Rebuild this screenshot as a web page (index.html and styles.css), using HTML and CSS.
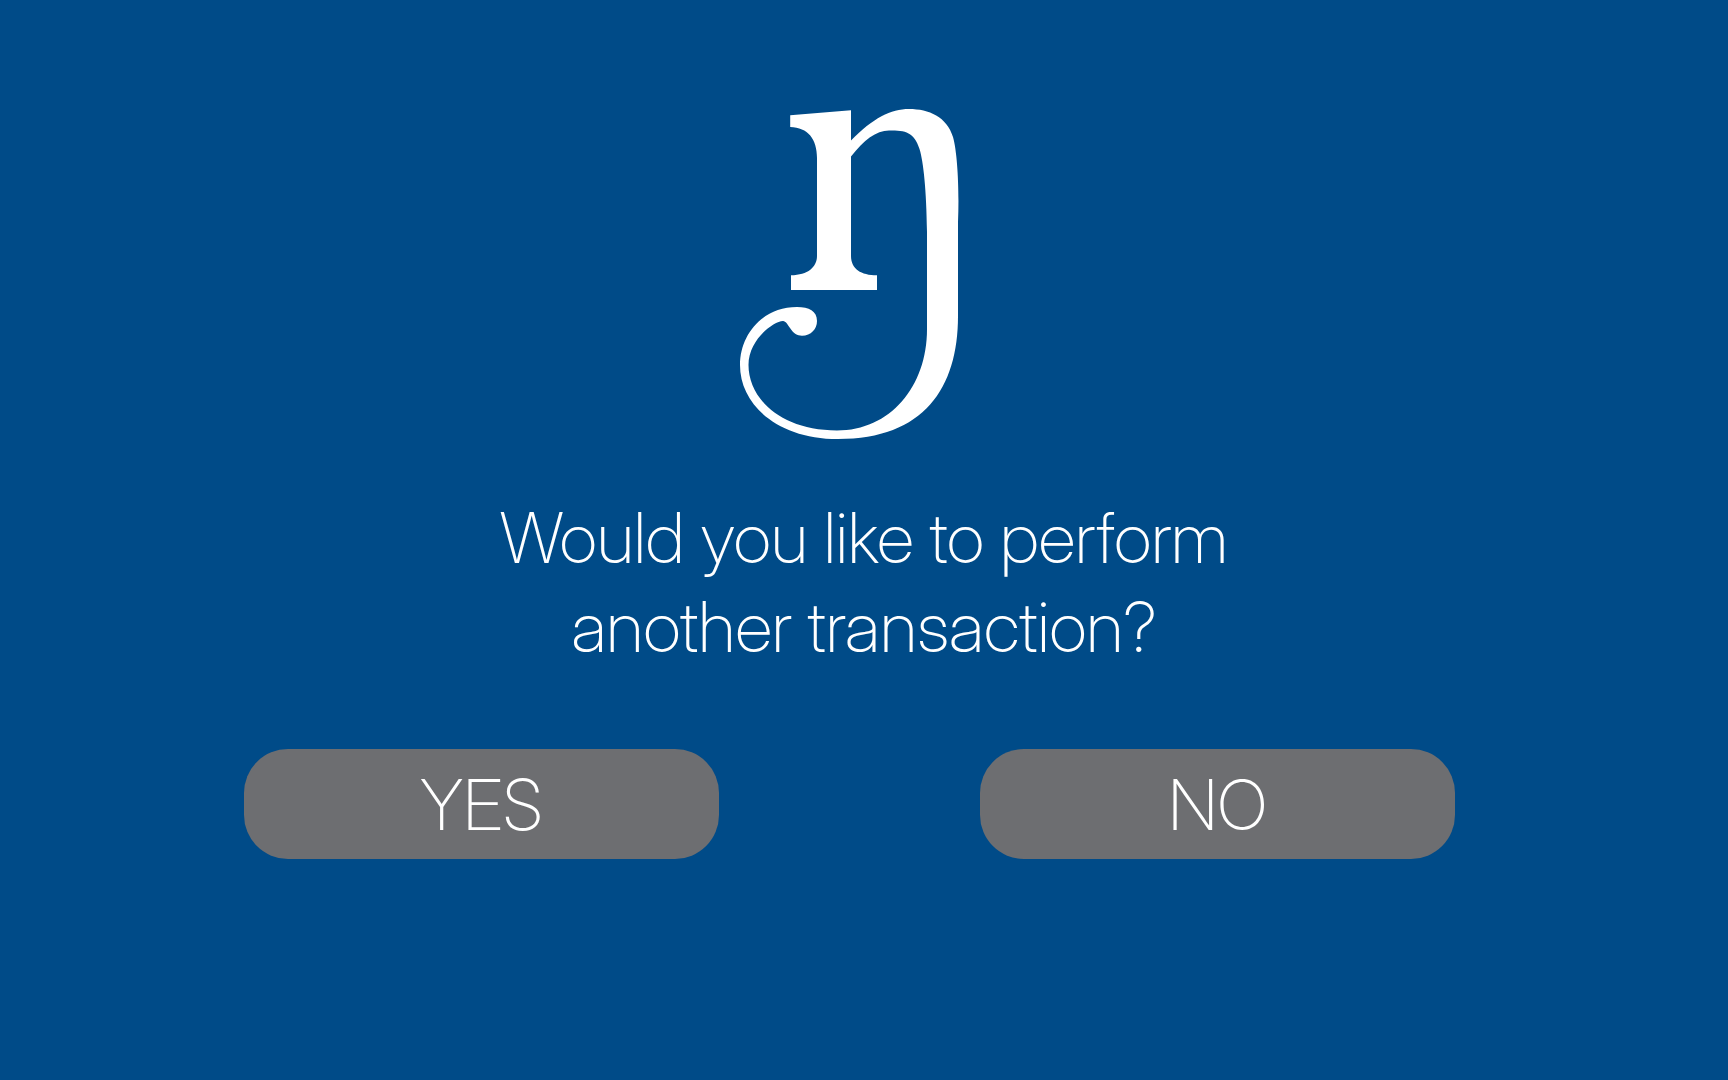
FILE: index.html
```html
<!DOCTYPE html>
<html lang="en">
<head>
<meta charset="utf-8">
<meta name="viewport" content="width=device-width, initial-scale=1">
<title>Another transaction?</title>
<link rel="stylesheet" href="styles.css">
</head>
<body>
<main class="screen">
  <div class="brand">
    <svg class="logo" viewBox="740 108 219 332" role="img" aria-label="Logo">
      <path fill="currentColor" d="M790.2 115.2 L851 110.2 V140.5 C873 118 891 109 909 109 C929 109 947 117 953 137 C957.5 153 959.4 190 958 222 V316 C958 388 924 439 838 439 C778 439 740 405 740 365 C740 334 763 307 797 307 C809 307 817 311 817 321 C817 329 811 335.7 802 335.7 C797 335.7 794 334 790 328 C787 324 786 321.3 783 321 C773 321.5 748.5 340 748.5 365 C748.5 398 780 430.5 837 430.5 C890 430.5 927 387 927 329 V232 C926.5 190 923.5 162 919.5 149 C914 132 906 130.5 889 130.5 C876 130.5 864 140 851 156.5 V256 C851 269 861 275.3 877 275.3 V290 H791 V275.3 C808 275 817 267 817 256 V158 C817 139 808 127.5 790.2 127 Z"/>
    </svg>
  </div>
  <h1 class="question">Would you like to perform<br>another transaction?</h1>
  <div class="actions">
    <button class="choice" type="button">YES</button>
    <button class="choice" type="button">NO</button>
  </div>
</main>
</body>
</html>
```
FILE: styles.css
```css
* { box-sizing: border-box; }

body {
  margin: 0;
  background: #004b88;
  color: #fff;
  font-family: "Inter Display", "Inter", "Liberation Sans", sans-serif;
  font-weight: 200;
}

.screen {
  min-height: 100vh;
  padding-top: 108px;
}

.brand {
  display: flex;
  justify-content: center;
  padding-right: 29px;
}

.logo {
  display: block;
  width: 219px;
  height: 332px;
}

.question {
  margin: 53px 0 0;
  font-size: 70px;
  font-weight: 200;
  line-height: 89px;
  text-align: center;
}

.actions {
  display: flex;
  gap: 261px;
  margin-top: 78px;
  padding: 0 273px 0 244px;
}

.choice {
  flex: 1;
  height: 110px;
  padding: 0;
  border: 0;
  border-radius: 44px;
  background: #6d6e71;
  color: inherit;
  font: inherit;
  font-size: 70px;
  cursor: pointer;
}
```
